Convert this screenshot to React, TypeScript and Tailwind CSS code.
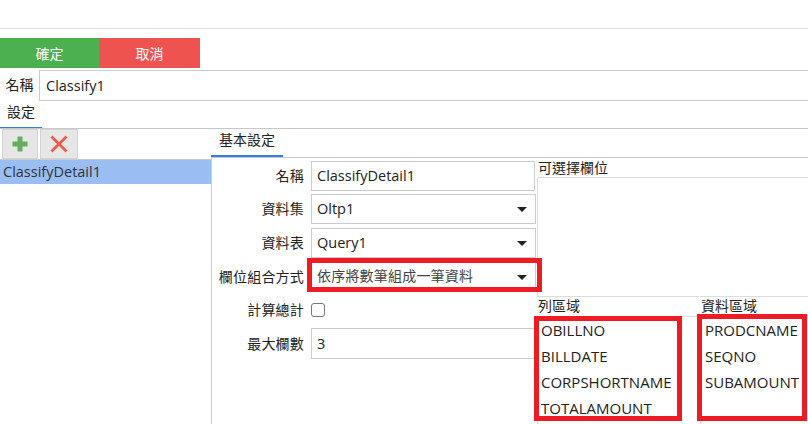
import React from "react";

const font = { fontFamily: '"Open Sans","Noto Sans CJK TC",sans-serif' };

function Caret() {
  return <span className="ml-auto mr-[8px] w-0 h-0 border-x-[5px] border-x-transparent border-t-[5px] border-t-[#222]" />;
}

function Row({ label, children, cls = "h-[30px]" }: { label: string; children: React.ReactNode; cls?: string }) {
  return (
    <div className={`flex items-center ${cls}`}>
      <div className="w-[92px] text-right text-[14px] leading-[20px] text-[#222] tracking-[0.2px] shrink-0">{label}</div>
      <div className="ml-[7px] flex-1 min-w-0 flex items-center h-full">{children}</div>
    </div>
  );
}

function Box({ children, w = "w-[225px]" }: { children: React.ReactNode; w?: string }) {
  return (
    <div className={`${w} h-full border border-[#ccc] flex items-center pl-[5px] text-[14.5px] text-[#222] bg-white`}>{children}</div>
  );
}

export default function App() {
  return (
    <div style={font} className="relative w-[808px] h-[424px] overflow-hidden bg-white flex flex-col text-[#222]">
      <div className="h-[29px] shrink-0 border-b border-[#e0e0e0]" />
      <div className="flex mt-[9px] h-[30px] shrink-0 text-white text-[14px]">
        <div className="w-[99px] bg-[#4caf50] flex items-center justify-center">確定</div>
        <div className="w-[101px] bg-[#ef5350] flex items-center justify-center">取消</div>
      </div>
      <div className="mt-[2px] h-[31px] shrink-0 flex items-stretch">
        <div className="w-[39px] flex items-center justify-center text-[14px] pb-[2px]">名稱</div>
        <div className="flex-1 border border-[#ccc] border-r-0 flex items-center pl-[6px] text-[14.5px]">Classify1</div>
      </div>
      <div className="h-[28px] shrink-0 flex border-b border-[#c8c8c8]">
        <div className="w-[42px] h-[27px] border-b border-[#2f80e4] flex items-center justify-center text-[14px] pb-[5px]">設定</div>
      </div>
      <div className="flex-1 flex min-h-0">
        <div className="w-[211px] shrink-0 flex flex-col">
          <div className="h-[31px] flex border-b border-[#ccc] gap-[2px] pl-[2px]">
            <div className="w-[36px] h-[30px] bg-[#e6e6e6] border border-[#d4d4d4] flex items-center justify-center">
              <svg width="16" height="16" viewBox="0 0 16 16">
                <path d="M5.5 0.5h5v5h5v5h-5v5h-5v-5h-5v-5h5z" fill="#62b05f" />
              </svg>
            </div>
            <div className="w-[38px] h-[30px] bg-[#e6e6e6] border border-[#d4d4d4] flex items-center justify-center">
              <svg width="18" height="18" viewBox="0 0 18 18">
                <path d="M1.5 1.5L16.5 16.5M16.5 1.5L1.5 16.5" stroke="#e85c4c" strokeWidth="2.8" />
              </svg>
            </div>
          </div>
          <div className="h-[24px] bg-[#9abdf2] flex items-center pl-[3px] text-[14.5px] text-[#333]">ClassifyDetail1</div>
        </div>
        <div className="flex-1 flex flex-col min-w-0">
          <div className="h-[29px] shrink-0 border-b border-[#c8c8c8] flex">
            <div className="w-[72px] h-[28px] border-b-[2px] border-[#2f80e4] flex items-center justify-center text-[14px] pb-[6px]">基本設定</div>
          </div>
          <div className="flex-1 flex border-l border-[#ccc] min-h-0">
            <div className="w-[325px] shrink-0 pt-[3px] flex flex-col">
              <Row label="名稱"><Box w="w-[224px]">ClassifyDetail1</Box></Row>
              <Row label="資料集" cls="h-[30px] mt-[3px]"><Box>Oltp1<Caret /></Box></Row>
              <Row label="資料表" cls="h-[30px] mt-[4px]"><Box>Query1<Caret /></Box></Row>
              <Row label="欄位組合方式" cls="h-[30px] mt-[4px]"><Box><span className="tracking-[0.2px] text-[14px] leading-[18px] pb-[2px] text-[#444]">依序將數筆組成一筆資料</span><Caret /></Box></Row>
              <Row label="計算總計" cls="h-[28px] mt-[4px]">
                <span className="w-[14px] h-[14px] border border-[#777] rounded-[3px] bg-white" />
              </Row>
              <Row label="最大欄數" cls="h-[31px] mt-[4px]"><Box w="w-[226px]">3</Box></Row>
            </div>
            <div className="flex-1 flex flex-col min-w-0">
              <div className="h-[19px] shrink-0 text-[14px] leading-[20px] pl-[1px]">可選擇欄位</div>
              <div className="h-[120px] shrink-0 border-t border-b border-l border-[#ddd]" />
              <div className="flex-1 grid grid-cols-[163px_1fr] min-h-0">
                <div className="flex flex-col">
                  <div className="h-[20px] pl-[1px] text-[14px] leading-[18px] border-b border-[#ddd]">列區域</div>
                  <div className="flex-1 pl-[3px] border-l border-[#ddd] text-[15px]">
                    {["OBILLNO", "BILLDATE", "CORPSHORTNAME", "TOTALAMOUNT"].map((t) => (
                      <div key={t} className="h-[26px] flex items-center">{t}</div>
                    ))}
                  </div>
                </div>
                <div className="flex flex-col">
                  <div className="h-[20px] pl-[1px] text-[14px] leading-[18px] border-b border-[#ddd]">資料區域</div>
                  <div className="flex-1 pl-[4px] border-l border-[#ddd] text-[15px]">
                    {["PRODCNAME", "SEQNO", "SUBAMOUNT"].map((t) => (
                      <div key={t} className="h-[26px] flex items-center">{t}</div>
                    ))}
                  </div>
                </div>
              </div>
            </div>
          </div>
        </div>
      </div>
      <div className="absolute left-[307px] top-[258px] w-[235px] h-[34px] border-[5px] border-[#ed1c24]" />
      <div className="absolute left-[534px] top-[316px] w-[148px] h-[105px] border-[5px] border-[#ed1c24]" />
      <div className="absolute left-[697px] top-[314px] w-[110px] h-[107px] border-[5px] border-[#ed1c24]" />
    </div>
  );
}
